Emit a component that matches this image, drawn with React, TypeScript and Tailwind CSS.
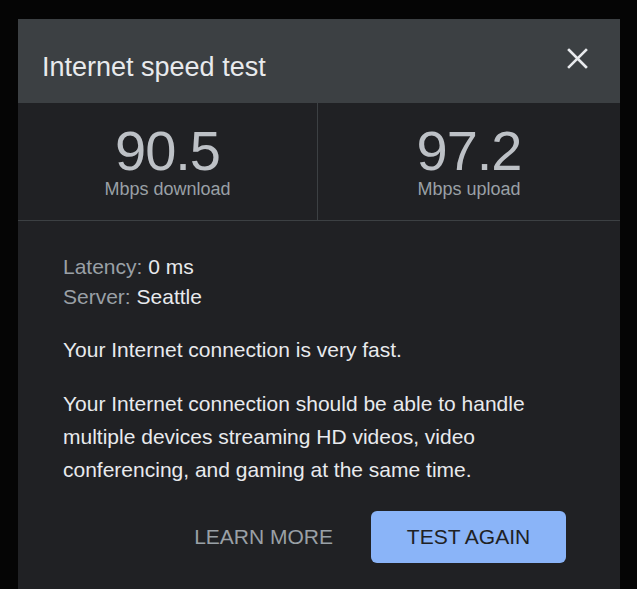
export default function App() {
  return (
    <div
      className="h-[589px] w-[637px] overflow-hidden bg-[#050505] pl-[18px] pt-[19px]"
      style={{ fontFamily: '"Liberation Sans", Arial, sans-serif' }}
    >
      <div className="h-[600px] w-[602px] bg-[#202124]">
        <div className="flex h-[84px] items-start justify-between bg-[#3c4043] pl-[24px] pr-[32px]">
          <h1 className="mt-[32px] text-[27px] leading-[32px] text-[#e8eaed]">Internet speed test</h1>
          <svg width="21" height="21" viewBox="0 0 21 21" className="mt-[29px]">
            <path d="M2 2 L19 19 M19 2 L2 19" stroke="#e8eaed" strokeWidth="2.6" strokeLinecap="square" />
          </svg>
        </div>

        <div className="grid h-[118px] grid-cols-[300px_1fr] border-b border-[#3c4043]">
          <div className="flex flex-col items-center border-r border-[#3c4043] pt-[21px]">
            <div className="text-[56px] leading-[54px] tracking-[-1px] text-[#bdc1c6]">90.5</div>
            <div className="text-[18px] leading-[22px] text-[#9aa0a6]">Mbps download</div>
          </div>
          <div className="flex flex-col items-center pt-[21px]">
            <div className="text-[56px] leading-[54px] tracking-[-1px] text-[#bdc1c6]">97.2</div>
            <div className="text-[18px] leading-[22px] text-[#9aa0a6]">Mbps upload</div>
          </div>
        </div>

        <div className="pl-[45px] pr-[40px] pt-[31px] text-[21px] text-[#e8eaed]">
          <div className="leading-[30px]">
            <span className="text-[#9aa0a6]">Latency: </span>0 ms
          </div>
          <div className="leading-[30px]">
            <span className="text-[#9aa0a6]">Server: </span>Seattle
          </div>
          <p className="mt-[21px] leading-[33px]">Your Internet connection is very fast.</p>
          <p className="mt-[21px] w-[475px] leading-[33px]">
            Your Internet connection should be able to handle multiple devices streaming HD videos, video
            conferencing, and gaming at the same time.
          </p>
          <div className="mt-[25px] flex items-center justify-end gap-[18px] pr-[14px]">
            <button type="button" className="px-[20px] text-[21px] text-[#9aa0a6]">
              LEARN MORE
            </button>
            <button
              type="button"
              className="h-[52px] w-[195px] rounded-[6px] bg-[#8ab4f8] text-[21px] text-[#202124]"
            >
              TEST AGAIN
            </button>
          </div>
        </div>
      </div>
    </div>
  );
}
